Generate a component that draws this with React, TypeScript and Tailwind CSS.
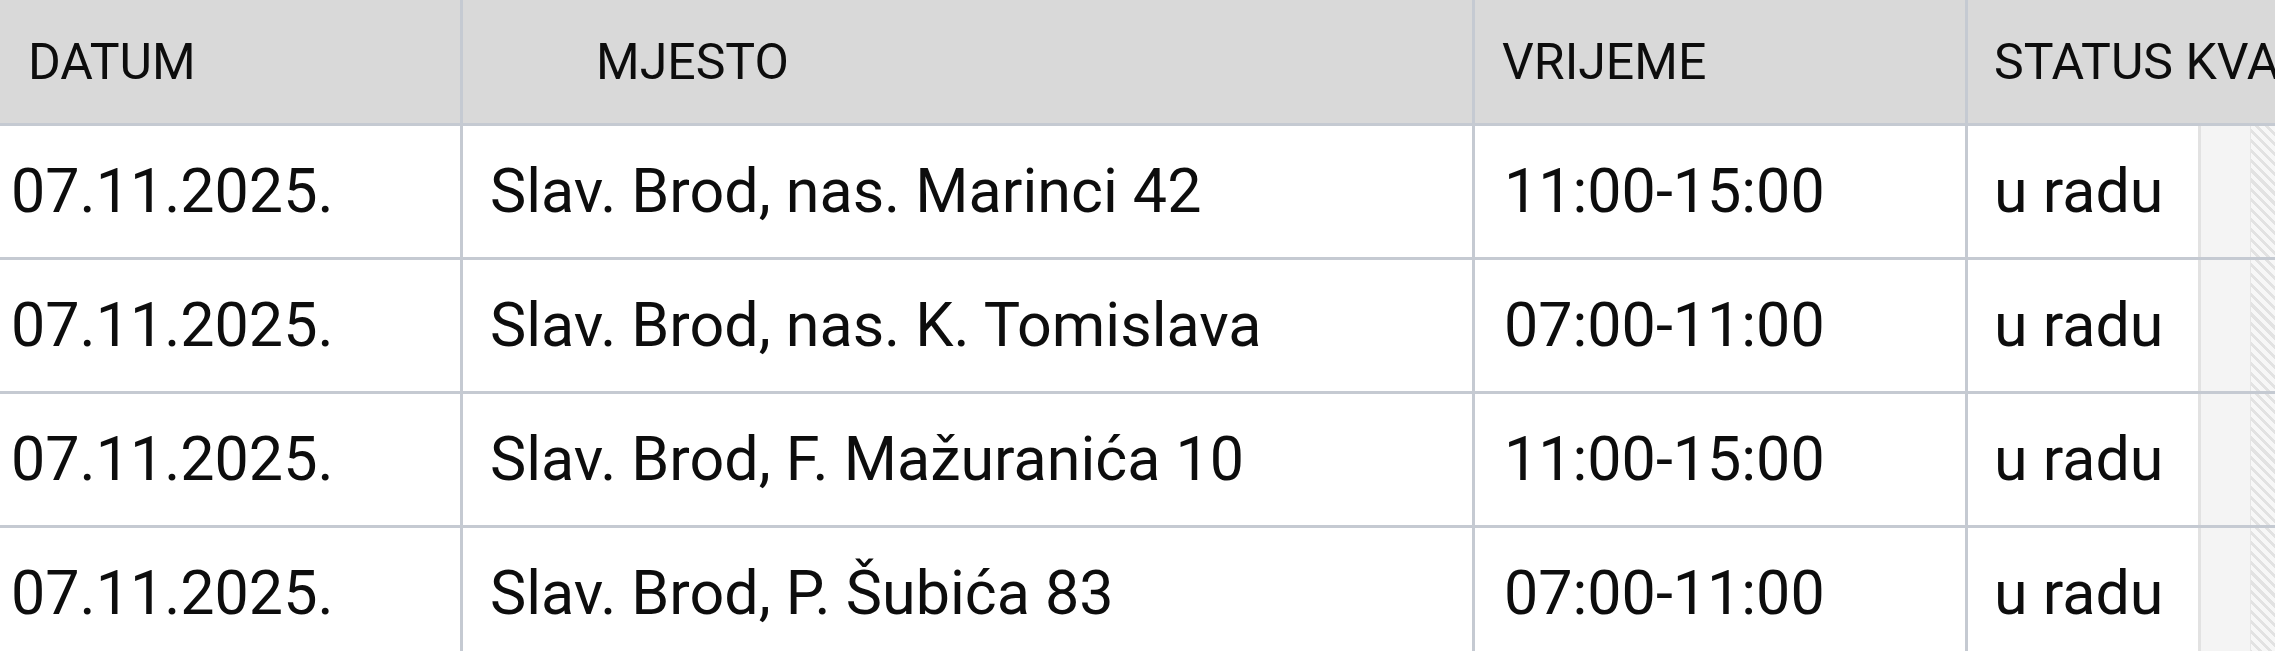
import React from "react";

const rows = [
  { d: "07.11.2025.", m: "Slav. Brod, nas. Marinci 42", v: "11:00-15:00", s: "u radu" },
  { d: "07.11.2025.", m: "Slav. Brod, nas. K. Tomislava", v: "07:00-11:00", s: "u radu" },
  { d: "07.11.2025.", m: "Slav. Brod, F. Mažuranića 10", v: "11:00-15:00", s: "u radu" },
  { d: "07.11.2025.", m: "Slav. Brod, P. Šubića 83", v: "07:00-11:00", s: "u radu" },
];

export default function App() {
  return (
    <div
      className="w-[2275px] h-[651px] overflow-hidden bg-white text-[#0d0d0d]"
      style={{ fontFamily: "Roboto, 'Noto Sans', sans-serif" }}
    >
      <div className="grid grid-cols-[463px_1012px_493px_1fr] h-[126px] bg-[#d9d9d9] border-b-[3px] border-[#c5cad2] text-[50px] leading-none">
        <div className="flex items-center pl-[28px] border-r-[3px] border-[#c5cad2]">DATUM</div>
        <div className="flex items-center pl-[133px] border-r-[3px] border-[#c5cad2]">MJESTO</div>
        <div className="flex items-center pl-[27px] border-r-[3px] border-[#c5cad2]">VRIJEME</div>
        <div className="flex items-center pl-[26px] whitespace-nowrap overflow-hidden">STATUS KVAROVA</div>
      </div>
      {rows.map((r, i) => (
        <div
          key={i}
          className="grid grid-cols-[463px_1012px_493px_233px_50px_1fr] h-[134px] border-b-[3px] border-[#c5cad2] text-[61px] leading-none"
        >
          <div className="flex items-center pl-[11px] border-r-[3px] border-[#c5cad2] whitespace-nowrap">{r.d}</div>
          <div className="flex items-center pl-[27px] border-r-[3px] border-[#c5cad2] whitespace-nowrap">{r.m}</div>
          <div className="flex items-center pl-[29px] border-r-[3px] border-[#c5cad2] whitespace-nowrap">{r.v}</div>
          <div className="flex items-center pl-[26px] border-r-[3px] border-[#e2e2e2] whitespace-nowrap">{r.s}</div>
          <div className="bg-[#f4f4f4] border-r border-[#e6e6e6]"></div>
          <div className="bg-[repeating-linear-gradient(45deg,#f7f7f7_0px,#f7f7f7_4px,#e2e2e2_4px,#e2e2e2_7px)]"></div>
        </div>
      ))}
    </div>
  );
}
